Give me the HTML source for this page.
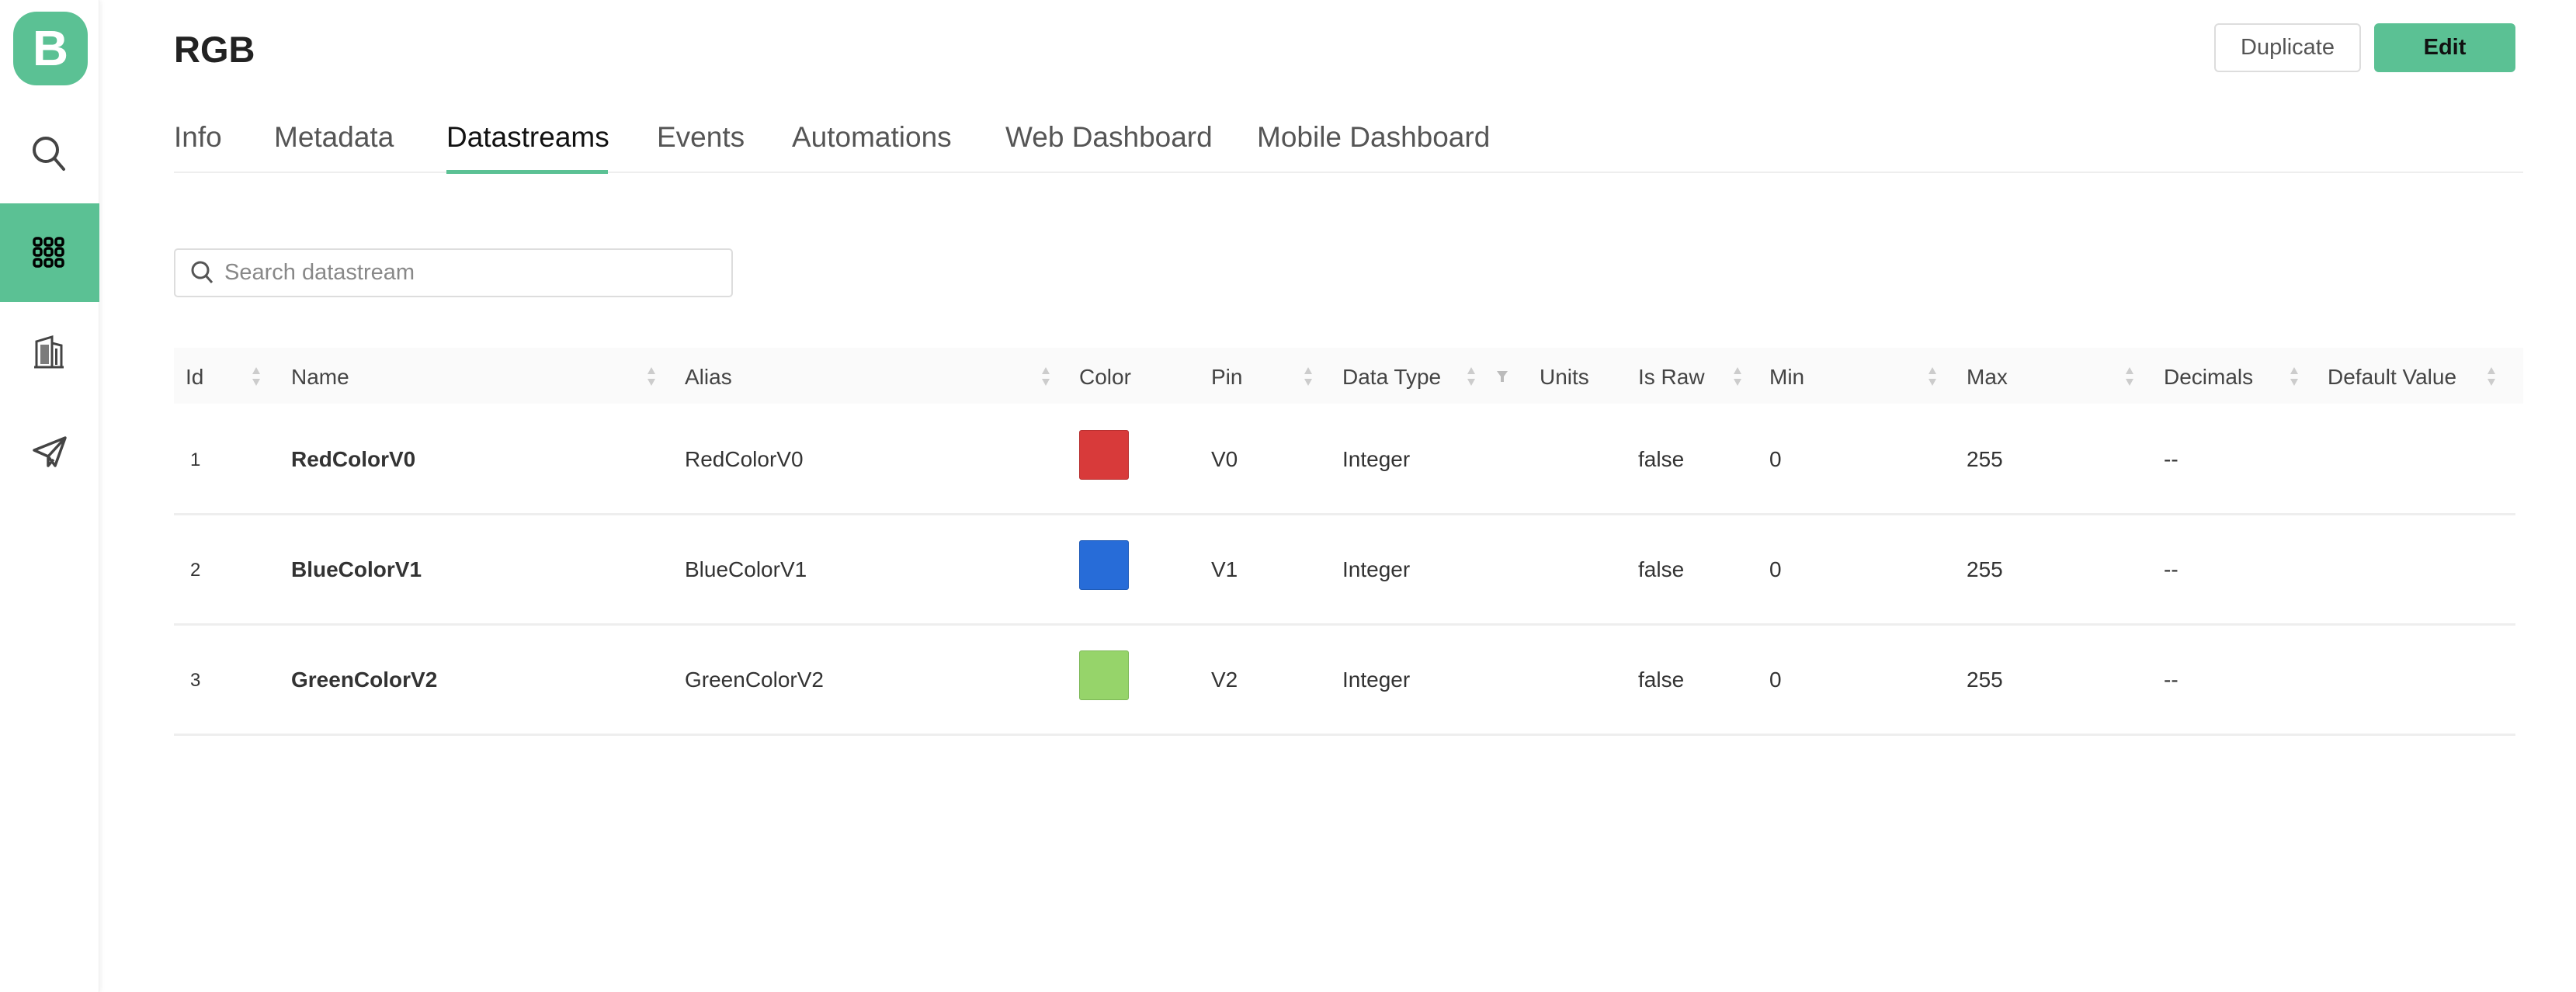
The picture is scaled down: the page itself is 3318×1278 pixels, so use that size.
<!DOCTYPE html>
<html><head><meta charset="utf-8"><style>
*{margin:0;padding:0;box-sizing:border-box}
body{width:3318px;height:1278px;background:#fff;font-family:"Liberation Sans",sans-serif;position:relative;overflow:hidden;color:#333}
.sb{position:absolute;left:0;top:0;width:128px;height:1278px;background:#fff;box-shadow:2px 0 6px rgba(0,0,0,0.06);border-right:1px solid #f0f0f0}
.logo{position:absolute;left:17px;top:15px;width:96px;height:95px;background:#5bc194;border-radius:30px;color:#fff;font-weight:bold;font-size:64px;text-align:center;line-height:95px}
.act{position:absolute;left:0;top:262px;width:128px;height:127px;background:#5bc194}
.abs{position:absolute;white-space:nowrap}
.tab{position:absolute;top:156px;font-size:37px;color:#555}
.th{position:absolute;top:470px;font-size:28px;color:#444}
.td{position:absolute;font-size:28px;color:#333}
.sort{position:absolute;top:470px;width:14px;height:30px}
.sw{position:absolute;left:1390px;width:64px;height:64px;border-radius:3px}
.div{position:absolute;left:224px;width:3016px;height:3px;background:#eee}
</style></head><body>
<div class="sb">
<div class="logo">B</div>
<div class="act"></div>
<svg class="abs" style="left:0;top:0" width="128" height="640" fill="none" stroke="#444" stroke-width="4">
<circle cx="59" cy="193" r="15"/><line x1="70" y1="204" x2="82" y2="218" stroke-linecap="round"/>
<g stroke="#000" stroke-width="3.5">
<rect x="44" y="307" width="9" height="9" rx="3"/><rect x="58" y="307" width="9" height="9" rx="3"/><rect x="72" y="307" width="9" height="9" rx="3"/>
<rect x="44" y="320" width="9" height="9" rx="3"/><rect x="58" y="320" width="9" height="9" rx="3"/><rect x="72" y="320" width="9" height="9" rx="3"/>
<rect x="44" y="334" width="9" height="9" rx="3"/><rect x="58" y="334" width="9" height="9" rx="3"/><rect x="72" y="334" width="9" height="9" rx="3"/>
</g>
<path d="M44 473H82M47 473V440L67 434V473M67 442L79 445V473" stroke-width="3"/>
<g fill="#444" stroke="none"><rect x="52" y="444" width="11" height="25" opacity=".7"/><rect x="71" y="449" width="3" height="21"/></g>
<path d="M44 580L84 564L71 600L62 588ZM84 564L62 588L62 600L69 592" stroke-width="3.5" stroke-linejoin="round"/>
</svg>
</div>

<div class="abs" style="left:224px;top:36px;font-size:47px;font-weight:bold;color:#222">RGB</div>
<div class="abs" style="left:2852px;top:30px;width:189px;height:63px;border:2px solid #ddd;border-radius:6px;text-align:center;line-height:59px;font-size:29px;color:#555">Duplicate</div>
<div class="abs" style="left:3058px;top:30px;width:182px;height:63px;background:#5bc194;border-radius:6px;text-align:center;line-height:63px;font-size:29px;font-weight:bold;color:#111">Edit</div>

<div class="tab" style="left:224px">Info</div>
<div class="tab" style="left:353px">Metadata</div>
<div class="tab" style="left:575px;color:#111">Datastreams</div>
<div class="tab" style="left:846px">Events</div>
<div class="tab" style="left:1020px">Automations</div>
<div class="tab" style="left:1295px">Web Dashboard</div>
<div class="tab" style="left:1619px">Mobile Dashboard</div>
<div class="abs" style="left:224px;top:221px;width:3026px;height:2px;background:#eee"></div>
<div class="abs" style="left:575px;top:219px;width:208px;height:5px;background:#5bc194"></div>

<div class="abs" style="left:224px;top:320px;width:720px;height:63px;border:2px solid #ddd;border-radius:5px"></div>
<svg class="abs" style="left:244px;top:334px" width="34" height="34" fill="none" stroke="#555" stroke-width="3"><circle cx="14" cy="14" r="10"/><line x1="21" y1="21" x2="29" y2="30"/></svg>
<div class="abs" style="left:289px;top:335px;font-size:29px;color:#888">Search datastream</div>

<div class="abs" style="left:224px;top:448px;width:3026px;height:72px;background:#fafafa"></div>
<div class="th" style="left:239px">Id</div>
<div class="th" style="left:375px">Name</div>
<div class="th" style="left:882px">Alias</div>
<div class="th" style="left:1390px">Color</div>
<div class="th" style="left:1560px">Pin</div>
<div class="th" style="left:1729px">Data Type</div>
<div class="th" style="left:1983px">Units</div>
<div class="th" style="left:2110px">Is Raw</div>
<div class="th" style="left:2279px">Min</div>
<div class="th" style="left:2533px">Max</div>
<div class="th" style="left:2787px">Decimals</div>
<div class="th" style="left:2998px">Default Value</div>
<svg class="abs" style="left:0;top:470px" width="3318" height="32" fill="#ccc">
<defs><g id="s"><path d="M0 12L5 3L10 12Z"/><path d="M0 18L5 27L10 18Z"/></g></defs>
<use href="#s" x="325"/><use href="#s" x="834"/><use href="#s" x="1342"/><use href="#s" x="1680"/><use href="#s" x="1890"/>
<path d="M1928 8H1942L1937 15V22H1933V15Z" fill="#bbb"/>
<use href="#s" x="2233"/><use href="#s" x="2484"/><use href="#s" x="2738"/><use href="#s" x="2950"/><use href="#s" x="3204"/>
</svg>

<div class="td" style="left:245px;top:579px;font-size:24px">1</div>
<div class="td" style="left:375px;top:576px;font-weight:bold">RedColorV0</div>
<div class="td" style="left:882px;top:576px">RedColorV0</div>
<div class="sw" style="top:554px;background:#d83a3a;border:1px solid #b83030"></div>
<div class="td" style="left:1560px;top:576px">V0</div>
<div class="td" style="left:1729px;top:576px">Integer</div>
<div class="td" style="left:2110px;top:576px">false</div>
<div class="td" style="left:2279px;top:576px">0</div>
<div class="td" style="left:2533px;top:576px">255</div>
<div class="td" style="left:2787px;top:576px">--</div>
<div class="div" style="top:661px"></div>

<div class="td" style="left:245px;top:721px;font-size:24px">2</div>
<div class="td" style="left:375px;top:718px;font-weight:bold">BlueColorV1</div>
<div class="td" style="left:882px;top:718px">BlueColorV1</div>
<div class="sw" style="top:696px;background:#276cd8;border:1px solid #1f5bb8"></div>
<div class="td" style="left:1560px;top:718px">V1</div>
<div class="td" style="left:1729px;top:718px">Integer</div>
<div class="td" style="left:2110px;top:718px">false</div>
<div class="td" style="left:2279px;top:718px">0</div>
<div class="td" style="left:2533px;top:718px">255</div>
<div class="td" style="left:2787px;top:718px">--</div>
<div class="div" style="top:803px"></div>

<div class="td" style="left:245px;top:863px;font-size:24px">3</div>
<div class="td" style="left:375px;top:860px;font-weight:bold">GreenColorV2</div>
<div class="td" style="left:882px;top:860px">GreenColorV2</div>
<div class="sw" style="top:838px;background:#96d46a;border:1px solid #7cb856"></div>
<div class="td" style="left:1560px;top:860px">V2</div>
<div class="td" style="left:1729px;top:860px">Integer</div>
<div class="td" style="left:2110px;top:860px">false</div>
<div class="td" style="left:2279px;top:860px">0</div>
<div class="td" style="left:2533px;top:860px">255</div>
<div class="td" style="left:2787px;top:860px">--</div>
<div class="div" style="top:945px"></div>
</body></html>
